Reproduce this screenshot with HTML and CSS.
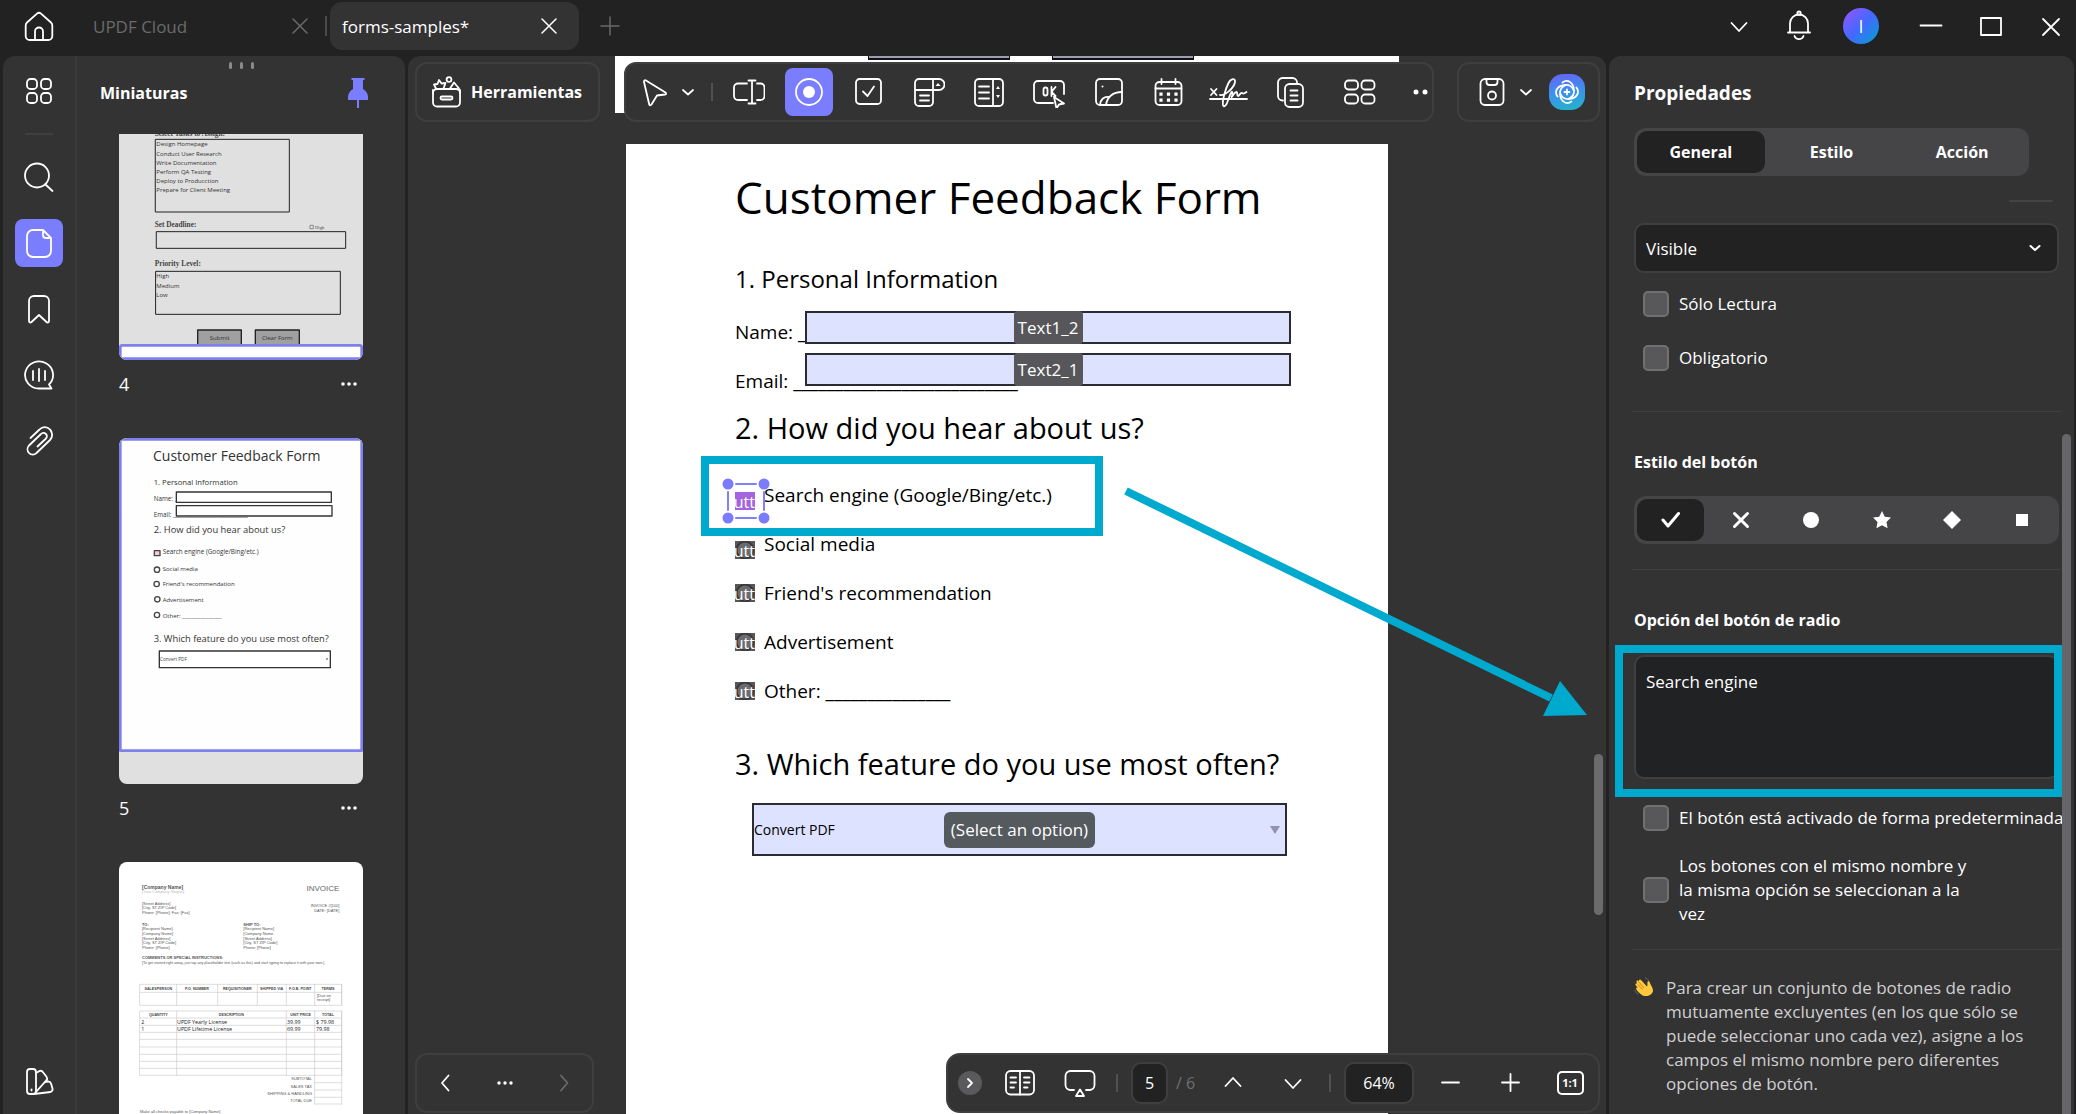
FILE: index.html
```html
<!DOCTYPE html>
<html lang="es">
<head>
<meta charset="utf-8">
<meta name="viewport" content="width=device-width, initial-scale=1">
<title>UPDF - forms-samples</title>
<link rel="stylesheet" href="styles.css">
</head>
<body>
<div class="app">
  <header class="titlebar">
    <button class="icon-btn home" aria-label="Inicio"><svg class="i32" viewBox="0 0 32 32"><path d="M14 3.6a3 3 0 0 1 4 0L28 12.5a4 4 0 0 1 1.300 3V26a4 4 0 0 1-4 4H6.700a4 4 0 0 1-4-4V15.500a4 4 0 0 1 1.300-3zM12 30V21.500a4 4 0 0 1 8 0V30"/></svg></button>
    <div class="tab tab-idle"><span>UPDF Cloud</span><button class="icon-btn" aria-label="Cerrar UPDF Cloud"><svg class="i16" viewBox="0 0 16 16"><path d="M1 1l14 14M15 1L1 15"/></svg></button></div>
    <div class="tab tab-open"><span>forms-samples*</span><button class="icon-btn" aria-label="Cerrar forms-samples"><svg class="i16" viewBox="0 0 16 16"><path d="M1 1l14 14M15 1L1 15"/></svg></button></div>
    <button class="icon-btn add" aria-label="Nueva pestaña"><svg class="i20" viewBox="0 0 20 20"><path d="M10 1v18M1 10h18"/></svg></button>
    <div class="window-tools">
      <button class="icon-btn" aria-label="Más"><svg class="i32" viewBox="0 0 32 32"><path d="M8.500 13l7.500 8 7.500-8"/></svg></button>
      <button class="icon-btn" aria-label="Notificaciones"><svg class="i32" viewBox="0 0 32 32"><path d="M7 22.500V13.500a9 9 0 0 1 18 0V22.500M5 22.500h22M11.500 26a4.800 4.800 0 0 0 9 0"/><circle cx="16" cy="3.200" r="1.700"/></svg></button>
      <button class="avatar" aria-label="Cuenta">I</button>
      <button class="icon-btn" aria-label="Minimizar"><svg class="i32" viewBox="0 0 32 32"><path d="M5.500 15.500h21"/></svg></button>
      <button class="icon-btn" aria-label="Maximizar"><svg class="i32" viewBox="0 0 32 32"><path d="M6 8h20v17H6z"/></svg></button>
      <button class="icon-btn" aria-label="Cerrar"><svg class="i32" viewBox="0 0 32 32"><path d="M8 9l16 16M24 9L8 25"/></svg></button>
    </div>
  </header>

  <div class="workspace">
    <nav class="rail" aria-label="Paneles">
      <button class="rail-btn" aria-label="Organizar"><svg class="i32" viewBox="0 0 32 32"><rect x="4" y="4" width="10" height="10" rx="3.500"/><rect x="18" y="4" width="10" height="10" rx="3.500"/><rect x="4" y="18" width="10" height="10" rx="3.500"/><rect x="18" y="18" width="10" height="10" rx="3.500"/></svg></button>
      <hr class="rail-line">
      <button class="rail-btn" aria-label="Buscar"><svg class="i32" viewBox="0 0 32 32"><circle cx="14" cy="14.500" r="12"/><path d="M22.500 23.500l7 6.500"/></svg></button>
      <button class="rail-btn on" aria-label="Miniaturas"><svg class="i32" viewBox="0 0 32 32"><path d="M20 3H10a6 6 0 0 0-6 6v15a6 6 0 0 0 6 6h12a6 6 0 0 0 6-6V11zM20 3v5a3 3 0 0 0 3 3h5"/></svg></button>
      <button class="rail-btn" aria-label="Marcadores"><svg class="i32" viewBox="0 0 32 32"><path d="M6 28V8a5 5 0 0 1 5-5h10a5 5 0 0 1 5 5v20c0 1.500-1.500 2-2.500 1L16 22l-7.500 7C7.500 30 6 29.500 6 28z"/></svg></button>
      <button class="rail-btn" aria-label="Comentarios"><svg class="i32" viewBox="0 0 32 32"><path d="M26 25.500A14 13.500 0 1 0 16 29.500h12.500z"/><path d="M10 12v9M16 10v12M22 12v9"/></svg></button>
      <button class="rail-btn" aria-label="Adjuntos"><svg class="i32" viewBox="0 0 32 32"><path d="M7.500 13L16.500 4.500a7 7 0 0 1 10.500 0a7.500 7.500 0 0 1 0 10.500L13.500 28a5 5 0 0 1-7.500 0a5.500 5.500 0 0 1 0-7.500L18 9a3.200 3.200 0 0 1 5 4.500L14.500 21.500"/></svg></button>
      <button class="rail-btn rail-last" aria-label="Temas"><svg class="i32" viewBox="0 0 32 32"><rect x="4" y="4" width="9" height="25" rx="3"/><path d="M13 8l3-1.800a3 3 0 0 1 4 1l3.500 4.500a3 3 0 0 1 0 3.500L13 27M22 17l3-.5a3 3 0 0 1 3 2l1.500 5a3 3 0 0 1-2 3.500L11 29"/><path d="M8.500 24.500v1"/></svg></button>
    </nav>

    <aside class="thumbs">
      <div class="grip"><i></i><i></i><i></i></div>
      <div class="thumbs-head"><h2>Miniaturas</h2><button class="icon-btn" aria-label="Fijar panel"><svg class="pin" viewBox="0 0 20 30"><path d="M3.500 0h13v2H15v9c3 2 5 4.500 5 8v3H11v8H9v-8H0v-3c0-3.500 2-6 5-8V2H3.500z"/></svg></button></div>
      <div class="thumb-list">
        <figure class="thumb thumb-cut">
          <svg viewBox="0 0 732 678" role="img" aria-label="Página 4">
            <rect width="732" height="678" fill="#e0e0e0"/>
            <g class="t-serif"><text x="107" y="6">Select Tasks to Assign:</text><text x="107" y="278">Set Deadline:</text><text x="107" y="396">Priority Level:</text></g>
            <g class="t-box"><rect x="110" y="16" width="401" height="218"/><rect x="113" y="293" width="567" height="50"/><rect x="111" y="412" width="553" height="129"/></g>
            <g class="t-ui"><text x="112" y="37">Design Homepage</text><text x="112" y="65">Conduct User Research</text><text x="112" y="92">Write Documentation</text><text x="112" y="120">Perform QA Testing</text><text x="112" y="147">Deploy to Producction</text><text x="112" y="175">Prepare for Client Meeting</text><text x="112" y="433">High</text><text x="112" y="461">Medium</text><text x="112" y="489">Low</text></g>
            <rect x="574" y="274" width="9" height="10" fill="none" stroke="#555"/><text x="588" y="284" class="t-tiny">High</text>
            <g class="t-btn"><rect x="236" y="588" width="131" height="48"/><rect x="409" y="588" width="132" height="48"/></g>
            <g class="t-ui" text-anchor="middle"><text x="302" y="617">Submit</text><text x="475" y="617">Clear Form</text></g>
            <rect x="4" y="634" width="724" height="40" rx="6" fill="#fff" stroke="#7f80ee" stroke-width="8"/>
          </svg>
          <figcaption><span>4</span><button class="icon-btn" aria-label="Opciones de la página 4"><svg class="dots" viewBox="0 0 16 4"><circle cx="2" cy="2" r="1.800"/><circle cx="8" cy="2" r="1.800"/><circle cx="14" cy="2" r="1.800"/></svg></button></figcaption>
        </figure>
        <figure class="thumb">
          <svg viewBox="0 0 732 1038" role="img" aria-label="Página 5">
            <rect width="732" height="1038" fill="#e0e0e0"/>
            <rect x="4" y="4" width="724" height="934" fill="#fdfefd" stroke="#7f80ee" stroke-width="8"/>
            <g class="t-form">
              <text x="102" y="70" font-size="42">Customer Feedback Form</text>
              <text x="104" y="140" font-size="23">1. Personal Information</text>
              <text x="104" y="189" font-size="19">Name: _</text>
              <text x="104" y="237" font-size="19">Email: ___________________________</text>
              <text x="104" y="286" font-size="28">2. How did you hear about us?</text>
              <text x="131" y="347" font-size="19">Search engine (Google/Bing/etc.)</text>
              <text x="131" y="398" font-size="18">Social media</text>
              <text x="131" y="445" font-size="18">Friend's recommendation</text>
              <text x="131" y="492" font-size="18">Advertisement</text>
              <text x="131" y="539" font-size="18">Other: _______________</text>
              <text x="104" y="612" font-size="28">3. Which feature do you use most often?</text>
            </g>
            <g fill="#fff" stroke="#333" stroke-width="4"><rect x="172" y="162" width="465" height="31"/><rect x="172" y="203" width="467" height="31"/><rect x="121" y="639" width="513" height="50"/></g>
            <text x="123" y="668" font-size="14" fill="#444" font-family="Open Sans">Convert PDF</text><path d="M620 661h8l-4 6z" fill="#666"/>
            <rect x="106" y="338" width="17" height="15" fill="#f6c8dc" stroke="#444" stroke-width="4"/>
            <g fill="none" stroke="#444" stroke-width="4"><circle cx="114" cy="395" r="8"/><circle cx="113" cy="438" r="8"/><circle cx="115" cy="484" r="8"/><circle cx="114" cy="531" r="8"/></g>
          </svg>
          <figcaption><span>5</span><button class="icon-btn" aria-label="Opciones de la página 5"><svg class="dots" viewBox="0 0 16 4"><circle cx="2" cy="2" r="1.800"/><circle cx="8" cy="2" r="1.800"/><circle cx="14" cy="2" r="1.800"/></svg></button></figcaption>
        </figure>
        <figure class="thumb">
          <svg viewBox="0 0 732 1038" role="img" aria-label="Página 6">
            <rect width="732" height="1038" fill="#fff"/>
            <g class="t-inv">
              <text x="69" y="80" font-size="15" font-weight="700">[Company Name]</text><text x="69" y="94" fill="#bbb">[Your Company Slogan]</text>
              <text x="69" y="128">[Street Address]</text><text x="69" y="141">[City, ST ZIP Code]</text><text x="69" y="155">Phone: [Phone]; Fax: [Fax]</text>
              <text class="t-big" x="661" y="88">INVOICE</text>
              <text x="661" y="136" text-anchor="end">INVOICE #[100]</text><text x="661" y="149" text-anchor="end">DATE: [DATE]</text>
              <text x="69" y="191" font-weight="700">TO:</text><text x="69" y="205">[Recipient Name]</text><text x="69" y="219">[Company Name]</text><text x="69" y="233">[Street Address]</text><text x="69" y="246">[City, ST ZIP Code]</text><text x="69" y="260">Phone: [Phone]</text>
              <text x="373" y="191" font-weight="700">SHIP TO:</text><text x="373" y="205">[Recipient Name]</text><text x="373" y="219">[Company Name</text><text x="373" y="233">[Street Address]</text><text x="373" y="246">[City, ST ZIP Code]</text><text x="373" y="260">Phone: [Phone]</text>
              <text x="69" y="292" font-weight="700">COMMENTS OR SPECIAL INSTRUCTIONS:</text><text x="69" y="305" font-size="11">[To get started right away, just tap any placeholder text (such as this) and start typing to replace it with your own.]</text>
            </g>
            <g fill="none" stroke="#ccc" stroke-width="2"><path d="M63 367H668V430H63zM63 391H668M173 367V430M296 367V430M415 367V430M502 367V430M587 367V430M668 367V430"/><path d="M63 447H668V640H63zM63 468H668M63 490H668M63 511H668M63 532H668M63 555H668M63 577H668M63 598H668M63 619H668M173 447V640M502 447V640M587 447V726M668 447V726M587 662H668M587 684H668M587 706H668M587 726H668"/></g>
            <g class="t-th"><text x="118" y="383">SALESPERSON</text><text x="234" y="383">P.O. NUMBER</text><text x="355" y="383">REQUISITIONER</text><text x="458" y="383">SHIPPED VIA</text><text x="544" y="383">F.O.B. POINT</text><text x="627" y="383">TERMS</text><text x="118" y="462">QUANTITY</text><text x="337" y="462">DESCRIPTION</text><text x="545" y="462">UNIT PRICE</text><text x="627" y="462">TOTAL</text></g>
            <g class="t-inv"><text x="594" y="405">[Due on</text><text x="594" y="418">receipt]</text></g>
            <g class="t-row"><text x="67" y="485">2</text><text x="174" y="485">UPDF Yearly License</text><text x="504" y="485">39.99</text><text x="591" y="485">$ 79.98</text><text x="67" y="506">1</text><text x="174" y="506">UPDF Lifetime License</text><text x="504" y="506">69.99</text><text x="591" y="506">79.98</text></g>
            <g class="t-inv" text-anchor="end"><text x="579" y="655">SUBTOTAL</text><text x="579" y="677">SALES TAX</text><text x="579" y="699">SHIPPING &amp; HANDLING</text><text x="579" y="721">TOTAL DUE</text></g>
            <text x="63" y="752" font-size="12" fill="#555" font-family="Liberation Sans">Make all checks payable to [Company Name]</text>
          </svg>
        </figure>
      </div>
    </aside>

    <main class="viewer">
      <div class="pages">
        <div class="page-prev"><i></i><i></i></div>
        <article class="page">
          <h1>Customer Feedback Form</h1>
          <h2>1. Personal Information</h2>
          <div class="contact">
            <p>Name: _</p>
            <p>Email: ___________________________</p>
            <div class="fields">
              <div class="field"><input id="f1" type="text"><label for="f1">Text1_2</label></div>
              <div class="field"><input id="f2" type="text"><label for="f2">Text2_1</label></div>
            </div>
          </div>
          <h2 class="big">2. How did you hear about us?</h2>
          <div class="options">
            <div class="option low picked"><span class="widget"><input id="o1" type="radio" name="hear"><b>utt</b></span><label for="o1">Search engine (Google/Bing/etc.)</label>
              <svg class="handles" viewBox="0 0 48 46"><path d="M14 6h20M14 40h20M6 14v18M42 14v18" stroke="#8181f7" stroke-width="2"/><g fill="#7b7cfc" stroke="none"><circle cx="6" cy="6" r="5.500"/><circle cx="42" cy="6" r="5.500"/><circle cx="6" cy="40" r="5.500"/><circle cx="42" cy="40" r="5.500"/></g></svg></div>
            <div class="option low"><span class="widget"><input id="o2" type="radio" name="hear"><b>utt</b></span><label for="o2">Social media</label></div>
            <div class="option"><span class="widget"><input id="o3" type="radio" name="hear"><b>utt</b></span><label for="o3">Friend's recommendation</label></div>
            <div class="option"><span class="widget"><input id="o4" type="radio" name="hear"><b>utt</b></span><label for="o4">Advertisement</label></div>
            <div class="option"><span class="widget"><input id="o5" type="radio" name="hear"><b>utt</b></span><label for="o5">Other: _______________</label></div>
            <div class="callout"></div>
          </div>
          <h2 class="big last">3. Which feature do you use most often?</h2>
          <div class="feature"><select id="feat" aria-label="Feature"><option>Convert PDF</option></select><label for="feat">(Select an option)</label><svg viewBox="0 0 10 8"><path d="M0 0h10L5 8z"/></svg></div>
          <svg class="arrow" viewBox="0 0 480 240"><path d="M8 12L433 219" stroke-width="8"/><path class="tip" d="M442 202l27 34-44 1z"/></svg>
        </article>
      </div>
      <div class="scroll-thumb"></div>

      <div class="bar bar-top">
        <button class="box tools"><svg class="i32" viewBox="0 0 32 32"><rect x="2" y="13" width="27" height="17.500" rx="4"/><path d="M2 17v-3M29 17v-3M11 20.500h9a1.500 1.500 0 0 1 0 3h-9a1.500 1.500 0 0 1 0-3zM5 12.500l-2-4 3.500-.5L8 4l2.500 3.500 4-.5-2 5.500M19 12.500l4-6 5 6"/><circle cx="18" cy="3.500" r="2.400"/></svg><span>Herramientas</span></button>
        <div class="box forms" role="toolbar" aria-label="Campos de formulario">
          <button class="tool" aria-label="Seleccionar"><svg class="i32" viewBox="0 0 32 32"><path d="M7 4.500L26.500 16.500c1 .8.700 1.800-.5 2L18 19.500l-5.500 9c-1 1.200-2 1-2.300-.3L5 6c-.2-1.500.8-2.200 2-1.500z"/></svg></button>
          <button class="chev" aria-label="Más modos"><svg class="i12" viewBox="0 0 12 12"><path d="M1 4l5 4.500L11 4"/></svg></button>
          <i class="sep"></i>
          <button class="tool" aria-label="Campo de texto"><svg class="i32" viewBox="0 0 32 32"><path d="M14 7.500H5a4 4 0 0 0-4 4v8.500a4 4 0 0 0 4 4h9M24 7.500h3.500a4 4 0 0 1 4 4v8.500a4 4 0 0 1-4 4H24M15.500 4.500h7M19 4.500v23M15.500 27.500h7"/></svg></button>
          <button class="tool on" aria-label="Botón de radio"><svg class="i32" viewBox="0 0 32 32"><circle cx="16" cy="16" r="13"/><circle cx="16" cy="16" r="6" fill="#fff" stroke="none"/></svg></button>
          <button class="tool" aria-label="Casilla"><svg class="i32" viewBox="0 0 32 32"><rect x="3" y="3" width="25" height="25" rx="3.500"/><path d="M10 15.500l4.500 4.500L21 10.500"/></svg></button>
          <button class="tool" aria-label="Lista desplegable"><svg class="i32" viewBox="0 0 32 32"><path d="M21 3H6a4 4 0 0 0-4 4v19a4 4 0 0 0 4 4h10a4 4 0 0 0 4-4V14M20 3h6a5.500 5.500 0 0 1 0 11H2M20 3v11M7 19.500h9M7 24.500h9"/><path d="M22.500 10h5L25 7z" class="solid"/></svg></button>
          <button class="tool" aria-label="Cuadro de lista"><svg class="i32" viewBox="0 0 32 32"><rect x="2" y="3" width="28" height="27" rx="4"/><path d="M20 3v27M6 10.500h10M6 16.500h10M6 22.500h10"/><path d="M23 13h4l-2-3zM23 19h4l-2 3z" class="solid"/></svg></button>
          <button class="tool" aria-label="Botón"><svg class="i32" viewBox="0 0 32 32"><path d="M20 27H5a4 4 0 0 1-4-4V9a4 4 0 0 1 4-4h22a4 4 0 0 1 4 4v9"/><rect x="10.500" y="11.500" width="4" height="8" rx="2"/><path d="M18.500 11v9M22.500 11l-4 5 4 4M21 21l10 6.500-5 1-2.500 4z"/></svg></button>
          <button class="tool" aria-label="Imagen"><svg class="i32" viewBox="0 0 32 32"><rect x="3" y="3" width="26" height="26" rx="4"/><path d="M7 29c0-5 4-9 9-8M13 29c1-8 7-13 16-13"/><circle cx="9.500" cy="10.500" r="1" class="solid"/></svg></button>
          <button class="tool" aria-label="Fecha"><svg class="i32" viewBox="0 0 32 32"><rect x="2.500" y="6" width="26" height="23" rx="4"/><path d="M2.500 12.500h26M8.500 3v5M22.500 3v5"/><path d="M8 18v.1M15.500 18v.1M23 18v.1M8 24v.1M15.500 24v.1M23 24v.1" stroke-width="3.200" stroke-linecap="square"/></svg></button>
          <button class="tool" aria-label="Firma"><svg class="i40" viewBox="0 0 40 32"><path d="M2 13l5.500 6M7.500 13L2 19M1 23h37M11 19c5 1 14-7 15-13 .6-4-4-4-6.500 1C17 12 13 24 14 29c.6 2.500 3 1 4-2 2-5 3-9 4.500-11 1.500-1 1 4 0 5 2-2 3-5 5-5 1.500 0 0 4 1.500 4s2-3 3.500-3 1 2 5-1"/></svg></button>
          <button class="tool" aria-label="Copiar campos"><svg class="i32" viewBox="0 0 32 32"><path d="M10 24.500H9.500a4.500 4.500 0 0 1-4.500-4.500V6.500A4.500 4.500 0 0 1 9.500 2h10A4.500 4.500 0 0 1 24 6.500V8"/><rect x="12" y="8" width="18" height="23" rx="4.500"/><path d="M17.500 14.500h7M17.500 19.500h7M17.500 24.500h7"/></svg></button>
          <button class="tool tool-last" aria-label="Cuadrícula"><svg class="i32" viewBox="0 0 32 32"><rect x="1" y="4.500" width="13" height="9" rx="3.500"/><rect x="17.500" y="4.500" width="13" height="9" rx="3.500"/><rect x="1" y="18.500" width="13" height="9" rx="3.500"/><rect x="17.500" y="18.500" width="13" height="9" rx="3.500"/></svg></button>
          <button class="more" aria-label="Más herramientas"><svg viewBox="0 0 16 6"><circle cx="3" cy="3" r="2.500"/><circle cx="12" cy="3" r="2.500"/></svg></button>
        </div>
        <div class="box save">
          <button class="icon-btn" aria-label="Guardar"><svg class="i32" viewBox="0 0 32 32"><rect x="4.500" y="3" width="23" height="26" rx="4.500"/><path d="M10.500 3v3a3 3 0 0 0 3 3h5a3 3 0 0 0 3-3V3"/><circle cx="16" cy="19.500" r="4"/></svg></button>
          <button class="chev" aria-label="Opciones de guardado"><svg class="i12" viewBox="0 0 12 12"><path d="M1 4l5 4.500L11 4"/></svg></button>
          <button class="ai" aria-label="UPDF AI"><svg viewBox="0 0 36 36"><defs><path id="petal" d="M13.500 8.500C19 4.500 24.500 9 25 16c.3 4-1.500 7-5 8.500"/></defs><use href="#petal"/><use href="#petal" transform="rotate(90 18 18)"/><use href="#petal" transform="rotate(180 18 18)"/><use href="#petal" transform="rotate(270 18 18)"/><path d="M15.500 18h5M18 15.500v5"/></svg></button>
        </div>
      </div>

      <div class="bar bar-bottom">
        <div class="box history">
          <button class="icon-btn" aria-label="Anterior"><svg class="i32" viewBox="0 0 32 32"><path d="M19.500 8.500L13 16l6.500 7.500"/></svg></button>
          <button class="icon-btn" aria-label="Historial"><svg class="dots" viewBox="0 0 16 4"><circle cx="2" cy="2" r="1.700"/><circle cx="8" cy="2" r="1.700"/><circle cx="14" cy="2" r="1.700"/></svg></button>
          <button class="icon-btn dim" aria-label="Siguiente" disabled><svg class="i32" viewBox="0 0 32 32"><path d="M13 8.500l6.500 7.500-6.500 7.500"/></svg></button>
        </div>
        <div class="box pager">
          <button class="round" aria-label="Contraer"><svg class="i12" viewBox="0 0 12 12"><path d="M4 2l4 4-4 4"/></svg></button>
          <button class="tool" aria-label="Vista"><svg class="i32" viewBox="0 0 32 32"><rect x="2" y="4" width="28" height="23.500" rx="4.500"/><path d="M16 4v23.500M6.500 10.500h5.500M6.500 15.500h5.500M6.500 20.500h3.500M20 10.500h5.500M20 15.500h5.500M20 20.500h3.500"/></svg></button>
          <button class="tool" aria-label="Presentación"><svg class="i32" viewBox="0 0 32 32"><path d="M10 23H6.500a5 5 0 0 1-5-5V9a5 5 0 0 1 5-5h19a5 5 0 0 1 5 5v9a5 5 0 0 1-5 5H22M16 22.500l4 6.500h-8z"/></svg></button>
          <i class="sep"></i>
          <input class="page-no" type="text" value="5" aria-label="Página"><span class="total">/ 6</span>
          <button class="tool" aria-label="Página anterior"><svg class="i32" viewBox="0 0 32 32"><path d="M8.500 19l7.500-8 7.500 8"/></svg></button>
          <button class="tool" aria-label="Página siguiente"><svg class="i32" viewBox="0 0 32 32"><path d="M8.500 13l7.500 8 7.500-8"/></svg></button>
          <i class="sep"></i>
          <input class="zoom-no" type="text" value="64%" aria-label="Zoom">
          <button class="tool" aria-label="Alejar"><svg class="i32" viewBox="0 0 32 32"><path d="M8 15.500h17"/></svg></button>
          <button class="tool" aria-label="Acercar"><svg class="i32" viewBox="0 0 32 32"><path d="M8 15.500h17M16.500 7v17"/></svg></button>
          <button class="tool" aria-label="Tamaño real"><span class="ratio">1:1</span></button>
        </div>
      </div>
    </main>

    <aside class="props">
      <h2 class="props-title">Propiedades</h2>
      <div class="seg tabs" role="tablist"><button class="on" role="tab">General</button><button role="tab">Estilo</button><button role="tab">Acción</button></div>
      <i class="edge"></i>
      <div class="select"><select aria-label="Visibilidad"><option>Visible</option></select><svg class="i12" viewBox="0 0 12 12"><path d="M1.500 4L6 8l4.500-4"/></svg></div>
      <label class="check"><input type="checkbox"><span>Sólo Lectura</span></label>
      <label class="check"><input type="checkbox"><span>Obligatorio</span></label>
      <hr>
      <h3>Estilo del botón</h3>
      <div class="seg shapes">
        <button class="on" aria-label="Marca"><svg viewBox="0 0 20 20"><path d="M2 10l5 6L17.500 3.500"/></svg></button>
        <button aria-label="Cruz"><svg viewBox="0 0 20 20"><path d="M3.500 3.500l13 13M16.500 3.500l-13 13"/></svg></button>
        <button aria-label="Círculo"><svg class="full" viewBox="0 0 20 20"><circle cx="10" cy="10" r="8"/></svg></button>
        <button aria-label="Estrella"><svg class="full" viewBox="0 0 20 20"><path d="M10 1l2.800 5.700 6.200.9-4.500 4.400 1.100 6.200L10 15.300l-5.600 2.900 1.100-6.200L1 7.600l6.200-.9z"/></svg></button>
        <button aria-label="Rombo"><svg class="full" viewBox="0 0 20 20"><path d="M10 1l9 9-9 9-9-9z"/></svg></button>
        <button aria-label="Cuadrado"><svg class="full" viewBox="0 0 20 20"><path d="M4 4h12v12H4z"/></svg></button>
      </div>
      <hr>
      <h3><label for="opt">Opción del botón de radio</label></h3>
      <div class="opt-box"><textarea id="opt">Search engine</textarea><div class="callout"></div></div>
      <label class="check"><input type="checkbox"><span>El botón está activado de forma predeterminada</span></label>
      <label class="check tall"><input type="checkbox"><span>Los botones con el mismo nombre y la misma opción se seleccionan a la vez</span></label>
      <hr>
      <div class="tip-note">
        <svg viewBox="0 0 20 20"><path d="M8 19C5 17 1.500 13 2 12s1.500-.5 2 0L1.500 9c-.5-1.200.8-2 1.600-1.200L2.500 6c-.3-1.300 1-1.900 1.800-1L5 4.500c.2-1.300 1.500-1.200 2.200-.3L13 10.500c1-1.500-.2-4 .8-5 .8-.7 1.800 0 2 1 .5 2 3.200 5 3.200 8 0 4-6.500 7.500-11 4.500z" fill="#ffc83d" stroke="none"/><path d="M4 8.500l4.500 5M4.700 5.700l5 5.800" stroke="#c98a1c" stroke-width="1"/><path d="M11.500 2c1.500.3 2.500 1.300 3 2.500M1 14.500c.5 1.500 1.500 2.800 3 3.500" stroke="#6b6b6b" stroke-width="1"/></svg>
        <p>Para crear un conjunto de botones de radio mutuamente excluyentes (en los que sólo se puede seleccionar uno cada vez), asigne a los campos el mismo nombre pero diferentes opciones de botón.</p>
      </div>
      <div class="props-scroll"></div>
    </aside>
  </div>
</div>
</body>
</html>
```

FILE: styles.css
```css
:root {
  --bg: #222222;
  --panel: #333334;
  --accent: #7b7dff;
  --mark: #00a9ce;
}
* { box-sizing: border-box; }
body { margin: 0; background: var(--bg); color: #fff; font-family: "Open Sans", "Noto Sans", sans-serif; font-size: 17px; }
button { margin: 0; padding: 0; border: 0; background: none; color: inherit; font: inherit; }
input, select, textarea { margin: 0; font: inherit; color: inherit; border-radius: 0; }
h1, h2, h3, p, figure { margin: 0; font-weight: 400; }
i { font-style: normal; }
svg { display: block; fill: none; stroke: currentColor; stroke-width: 1.8; stroke-linecap: round; stroke-linejoin: round; flex: none; }
svg .solid { fill: #fff; stroke: none; }
.i12 { width: 12px; height: 12px; }
.i16 { width: 16px; height: 16px; }
.i20 { width: 20px; height: 20px; }
.i32 { width: 32px; height: 32px; }
.i40 { width: 40px; height: 32px; }
.icon-btn, .tool, .rail-btn, .chev { display: flex; align-items: center; justify-content: center; flex: none; }

.app { display: flex; flex-direction: column; height: 100vh; overflow: hidden; }

/* title bar */
.titlebar { display: flex; align-items: center; height: 56px; padding: 0 9px 4px 23px; flex: none; }
.tab { display: flex; align-items: center; justify-content: space-between; height: 48px; }
.tab-idle { width: 233px; margin: 0 19px 0 38px; padding-right: 18px; color: #6a6a6a; position: relative; }
.tab-idle::after { content: ""; position: absolute; right: -1px; width: 2px; height: 20px; background: #4a4a4a; }
.tab-open { width: 249px; padding: 0 22px 0 12px; margin-left: -15px; border-radius: 12px; background: var(--panel); }
.add { margin-left: 21px; color: #6a6a6a; }
.add svg, .tab svg { stroke-width: 1.5; }
.window-tools { display: flex; align-items: center; gap: 28px; margin-left: auto; }
.window-tools .avatar { margin-right: 8px; }
.avatar { width: 36px; height: 36px; border-radius: 50%; background: linear-gradient(135deg, #9a55ff, #4468ff 50%, #00a4cc); font-size: 18px; }

.workspace { display: flex; gap: 3px; flex: 1; min-height: 0; padding: 0 2px 0 3px; }
.rail { display: flex; flex-direction: column; align-items: center; gap: 18px; width: 74px; margin-right: -3px; padding: 11px 0 9px; background: var(--panel); border-radius: 12px 0 0 0; border-right: 2px solid #3a3a3b; flex: none; }
.rail-btn { width: 48px; height: 48px; border-radius: 8px; }
.rail-btn.on { background: var(--accent); }
.rail-line { width: 28px; height: 2px; margin: 0; border: 0; background: #3f3f40; }
.rail-last { margin-top: auto; }

/* thumbnails */
.thumbs { display: flex; flex-direction: column; width: 328px; flex: none; background: var(--panel); border-radius: 0 12px 0 0; }
.grip { display: flex; justify-content: center; gap: 8px; height: 14px; padding-top: 6px; }
.grip i { width: 3px; height: 7px; border-radius: 2px; background: #8a8a8a; }
.thumbs-head { display: flex; align-items: center; justify-content: space-between; height: 46px; margin-bottom: 18px; padding: 0 37px 0 23px; }
.thumbs-head h2, .tools span { font-size: 16px; font-weight: 700; }
.pin { width: 20px; height: 30px; fill: var(--accent); stroke: none; }
.thumb-list { flex: 1; min-height: 0; overflow: hidden; padding: 0 42px; }
.thumb > svg { width: 100%; border-radius: 8px; stroke: none; }
.thumb-cut > svg { border-radius: 0 0 8px 8px; }
.thumb figcaption { display: flex; align-items: center; justify-content: space-between; height: 48px; margin-bottom: 30px; padding-right: 6px; font-size: 18px; }
.dots { width: 16px; height: 4px; fill: currentColor; stroke: none; }
.t-serif { font: 700 22px "Liberation Serif", serif; fill: #444; }
.t-tiny { font: 14px "Liberation Serif", serif; fill: #444; }
.t-ui { font: 18px "Open Sans", sans-serif; fill: #333; }
.t-box { fill: none; stroke: #222; stroke-width: 3; }
.t-btn { fill: #a0a0a0; stroke: #222; stroke-width: 4; }
.t-form { font-family: "Open Sans", sans-serif; fill: #333; }
.t-inv { font-family: "Liberation Sans", sans-serif; font-size: 12px; fill: #555; }
.t-big { font-size: 24px; fill: #666; text-anchor: end; }
.t-th { font: 700 11px "Liberation Sans", sans-serif; fill: #444; text-anchor: middle; }
.t-row { font: 16px "Open Sans", sans-serif; fill: #222; }

/* document viewer */
.viewer { position: relative; flex: 1; min-width: 0; overflow: hidden; background: var(--panel); border-radius: 12px 12px 0 0; }
.pages { display: flex; flex-direction: column; align-items: center; gap: 31px; height: 100%; }
.page-prev { display: flex; gap: 42px; width: 784px; height: 57px; padding-left: 253px; background: #fff; flex: none; }
.page-prev i { width: 142px; height: 4px; border: 1px solid #111; border-top: 0; border-bottom-width: 2px; background: #9c9cb4; }
.page { position: relative; flex: 1 0 auto; width: 762px; padding: 23px 0 0 109px; background: #fff; color: #000; font-size: 19px; }
.page h1 { font-size: 44px; line-height: 60px; margin-bottom: 35px; }
.page h2 { font-size: 24px; line-height: 34px; margin-bottom: 12px; }
.page h2.big { font-size: 29px; line-height: 44px; margin-bottom: 20px; }
.page h2.last { margin: 27px 0 17px; }
.contact { position: relative; }
.contact p { line-height: 49px; }
.fields { position: absolute; top: 3px; left: 70px; display: flex; flex-direction: column; gap: 9px; }
.field { position: relative; display: flex; justify-content: center; width: 486px; height: 33px; }
.field input { position: absolute; inset: 0; width: 100%; border: 2px solid #2b2b33; background: #dde2ff; }
.field label { position: relative; width: 69px; line-height: 33px; border-radius: 4px; background: #57575b; color: #fff; text-align: center; font-size: 17px; }
.options { position: relative; }
.option { position: relative; display: flex; align-items: center; gap: 9px; height: 49px; }
.option.low .widget { margin-top: 13px; }
.widget { position: relative; width: 20px; height: 18px; overflow: hidden; }
.widget input { appearance: none; display: block; width: 20px; height: 18px; background: radial-gradient(circle, #6b6b6e 7px, #2e2e30 8px, #57575a 10px); }
.widget b { position: absolute; right: 0; bottom: -3px; font-size: 16px; font-weight: 400; line-height: 22px; color: #fff; pointer-events: none; }
.picked .widget input { background: #a463e0; }
.handles { position: absolute; left: -13px; top: 8px; width: 48px; height: 46px; }
.callout { position: absolute; border: 8px solid var(--mark); pointer-events: none; }
.options .callout { left: -34px; top: -14px; width: 402px; height: 80px; }
.feature { position: relative; display: flex; align-items: center; justify-content: center; width: 535px; height: 53px; margin-left: 17px; }
.feature select { position: absolute; inset: 0; width: 100%; appearance: none; padding: 0; border: 2px solid #2b2b33; background: #dde2ff; font-size: 14px; }
.feature label { position: relative; width: 151px; line-height: 36px; border-radius: 6px; background: #555a5e; color: #fff; text-align: center; font-size: 17px; }
.feature svg { position: absolute; right: 7px; width: 10px; height: 8px; fill: #8f93b0; stroke: none; }
.arrow { position: absolute; left: 492px; top: 335px; width: 480px; height: 240px; stroke: var(--mark); stroke-linecap: butt; z-index: 2; }
.arrow .tip { fill: var(--mark); stroke: none; }
.scroll-thumb { position: absolute; right: 3px; top: 66%; width: 9px; height: 161px; border-radius: 5px; background: #6b6b6d; }

.bar { position: absolute; left: 7px; right: 6px; display: flex; }
.bar-top { top: 6px; }
.bar-bottom { bottom: 1px; justify-content: space-between; }
.box { display: flex; align-items: center; height: 60px; border: 2px solid #3f3f41; border-radius: 12px; background: var(--panel); }
.tools { width: 185px; gap: 8px; padding-left: 14px; margin-right: 24px; flex: none; }
.forms { flex: 1; min-width: 0; overflow: hidden; padding-left: 5px; }
.tool { width: 48px; height: 48px; margin-right: 12px; border-radius: 8px; }
.tool:last-child { margin-right: 0; }
.forms .tool:first-child { margin-right: 0; }
.tool.on { background: var(--accent); }
.tool-last { margin-left: 11px; }
.chev { width: 18px; height: 48px; }
.sep { width: 2px; height: 18px; background: #515153; flex: none; }
.forms .sep { margin: 0 12px 0 14px; }
.more { margin-left: 17px; flex: none; }
.more svg { width: 16px; height: 6px; fill: #fff; stroke: none; }
.save { width: 143px; margin-left: 23px; padding-left: 17px; gap: 9px; flex: none; }
.ai { width: 36px; height: 36px; margin-left: 5px; border-radius: 14px; background: linear-gradient(170deg, #6a62f4, #3f8df0 45%, #22b5c8); }
.ai svg { width: 36px; height: 36px; }

.history { width: 179px; justify-content: space-between; padding: 0 12px; }
.dim { color: #6a6a6c; }
.pager { padding: 0 4px 0 10px; border-radius: 14px; }
.pager > * { flex: none; }
.round { display: flex; align-items: center; justify-content: center; width: 24px; height: 24px; margin-right: 14px; border-radius: 50%; background: #5a5a5d; }
.pager .tool + .sep { margin-right: 13px; }
.page-no, .zoom-no { height: 42px; padding: 0; border: 2px solid #3f3f41; border-radius: 10px; background: var(--bg); text-align: center; }
.page-no { width: 37px; }
.zoom-no { width: 70px; }
.total { width: 41px; padding-left: 8px; color: #6f6f71; }
.page-no, .zoom-no, .total { font-size: 16px; }
.zoom-no + .tool { margin-left: 12px; }
.ratio { display: block; width: 27px; height: 24px; border: 2px solid #fff; border-radius: 5px; font-size: 11px; font-weight: 700; line-height: 20px; }

/* properties */
.props { position: relative; width: 465px; flex: none; padding: 0 15px 0 25px; overflow: hidden; background: var(--panel); border-radius: 12px 12px 0 0; }
.props h2 { padding: 22px 0 20px; font-size: 19px; font-weight: 700; line-height: 30px; }
.props h3 { font-size: 16px; font-weight: 700; line-height: 24px; }
.props hr { height: 1px; margin: 0 -2px; border: 0; background: #3f3f41; }
.seg { display: flex; gap: 3px; height: 48px; padding: 3px; border-radius: 12px; background: #454547; }
.seg button { flex: 1; display: flex; align-items: center; justify-content: center; border-radius: 10px; }
.seg .on { background: var(--bg); }
.tabs { width: 395px; font-size: 16px; font-weight: 700; }
.edge { display: block; width: 44px; height: 2px; margin: 24px 6px 21px auto; border-radius: 1px; background: #444446; }
.select { position: relative; display: flex; align-items: center; height: 50px; }
.select select { appearance: none; width: 100%; height: 100%; padding: 0 13px 0 10px; border: 2px solid #3f3f41; border-radius: 10px; background: var(--bg); }
.select svg { position: absolute; right: 18px; stroke-width: 2; }
.check { display: flex; align-items: center; gap: 10px; height: 54px; padding-left: 9px; line-height: 24px; white-space: nowrap; }
.select + .check { margin-top: 4px; }
.check + hr { margin-top: 26px; }
.check input { appearance: none; width: 26px; height: 26px; flex: none; border: 2px solid #707072; border-radius: 5px; background: #58585a; }
.props hr + h3 { padding-top: 38px; }
.shapes { margin: 22px 0 25px; }
.shapes svg { width: 20px; height: 20px; stroke-width: 3; }
.shapes .full { fill: #fff; stroke: none; }
.opt-box { position: relative; height: 124px; margin: 23px 0 12px; }
.opt-box textarea { display: block; width: 100%; height: 100%; padding: 13px 10px; resize: none; border: 2px solid #3f3f41; border-radius: 10px; background: #212223; line-height: 24px; }
.opt-box .callout { inset: -10px -3px -18px -19px; }
.check.tall { height: 90px; white-space: normal; }
.check.tall span { width: 290px; }
.check.tall + hr { margin-top: 14px; }
.tip-note { display: flex; gap: 12px; padding: 26px 20px 0 0; color: #d0d0d1; line-height: 24px; }
.tip-note svg { width: 20px; height: 20px; }
.props-scroll { position: absolute; right: 3px; top: 378px; bottom: 0; width: 9px; border-radius: 5px 5px 0 0; background: #666668; }
```
